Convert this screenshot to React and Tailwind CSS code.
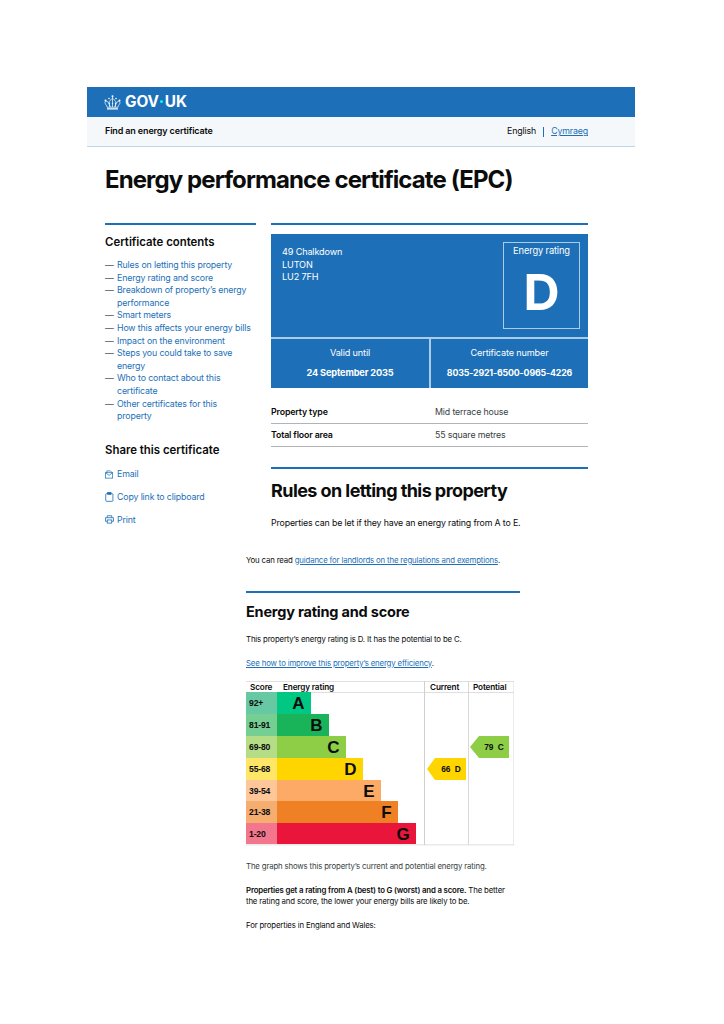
import React from "react";

const navItems = [
  ["Rules on letting this property"],
  ["Energy rating and score"],
  ["Breakdown of property’s energy", "performance"],
  ["Smart meters"],
  ["How this affects your energy bills"],
  ["Impact on the environment"],
  ["Steps you could take to save", "energy"],
  ["Who to contact about this", "certificate"],
  ["Other certificates for this", "property"],
];

const bands = [
  { s: "92+", l: "A", c: "#00c781", p: "#66c9a3", end: 65, y: 11, h: 22 },
  { s: "81-91", l: "B", c: "#19b459", p: "#75cf93", end: 83, y: 33, h: 22 },
  { s: "69-80", l: "C", c: "#8dce46", p: "#b5dd85", end: 100, y: 55, h: 22 },
  { s: "55-68", l: "D", c: "#ffd500", p: "#ffe666", end: 117, y: 77, h: 22 },
  { s: "39-54", l: "E", c: "#fcaa65", p: "#fdc79a", end: 135, y: 99, h: 21 },
  { s: "21-38", l: "F", c: "#ef8023", p: "#f5ad70", end: 152, y: 120, h: 22 },
  { s: "1-20", l: "G", c: "#e9153b", p: "#f4768c", end: 170, y: 142, h: 21 },
];

function Chart() {
  const arial = "'Liberation Sans', Arial, sans-serif";
  return (
    <svg width="268" height="165" viewBox="0 0 268 165" className="block mt-[12px]">
      <rect x="0" y="0" width="268" height="0.8" fill="#d8d8d8" />
      <rect x="0" y="11" width="268" height="0.8" fill="#d8d8d8" />
      <rect x="0" y="163.5" width="268" height="0.8" fill="#d8d8d8" />
      <rect x="178" y="0" width="1" height="164" fill="#cfcfcf" />
      <rect x="222" y="0" width="1" height="164" fill="#d8d8d8" />
      <rect x="267.5" y="0" width="0.8" height="164" fill="#d8d8d8" />
      <g fontFamily="'Inter', sans-serif" fontSize="8.2" fontWeight="600" fill="#0b0c0c">
        <text x="4" y="9.3">Score</text>
        <text x="37" y="9.3">Energy rating</text>
        <text x="184" y="9.3">Current</text>
        <text x="227" y="9.3">Potential</text>
      </g>
      {bands.map((b) => (
        <g key={b.l}>
          <rect x="0" y={b.y} width="31" height={b.h} fill={b.p} />
          <rect x="31" y={b.y} width={b.end - 31} height={b.h} fill={b.c} />
          <text x="3" y={b.y + 14} fontFamily={arial} fontSize="8.6" fontWeight="700" fill="#0b0c0c">{b.s}</text>
          <text x={b.end - 6.5} y={b.y + 17} textAnchor="end" fontFamily={arial} fontSize="17" fontWeight="700" fill="#0b0c0c">{b.l}</text>
        </g>
      ))}
      <polygon points="181,88 189,77 220,77 220,99 189,99" fill="#ffd500" />
      <text x="205" y="91" textAnchor="middle" fontFamily={arial} fontSize="8.4" fontWeight="700" fill="#0b0c0c" xmlSpace="preserve">66  D</text>
      <polygon points="224,66 233,55 263,55 263,77 233,77" fill="#8dce46" />
      <text x="248" y="69" textAnchor="middle" fontFamily={arial} fontSize="8.4" fontWeight="700" fill="#0b0c0c" xmlSpace="preserve">79  C</text>
    </svg>
  );
}

function Crown() {
  return (
    <svg width="17" height="15" viewBox="0 0 34 30" fill="none">
      <g fill="#ffffff">
        <circle cx="17" cy="2.5" r="2" />
        <circle cx="10" cy="7" r="1.6" />
        <circle cx="24" cy="7" r="1.6" />
        <circle cx="3" cy="11" r="2" />
        <circle cx="31" cy="11" r="2" />
        <circle cx="11" cy="17" r="1.3" />
        <circle cx="17" cy="17" r="1.3" />
        <circle cx="23" cy="17" r="1.3" />
        <rect x="6" y="26.5" width="22" height="2.5" />
      </g>
      <path d="M17 4v3M6.5 24.5C5 20 2 18 2 15c0-2 2-3 4-2 3 1 5 5 6 11M27.5 24.5C29 20 32 18 32 15c0-2-2-3-4-2-3 1-5 5-6 11M12 24c-2-6-3-10 0-13 2-2 3-3 5-4 2 1 3 2 5 4 3 3 2 7 0 13M17 7v17M6 24.5h22" stroke="#ffffff" strokeWidth="1.4" />
    </svg>
  );
}

export default function App() {
  return (
    <div className="min-h-[1024px] bg-white pt-[87px] pl-[87px] font-['Inter',sans-serif] text-[#0b0c0c] text-[8.8px] tracking-[-0.14px] leading-[12.6px]">
      <div className="w-[548px]">
        <div className="bg-[#1d70b8] h-[30px] pl-[17px] flex items-center gap-[4px] text-white">
          <Crown />
          <span className="flex items-center text-[15.3px] font-bold leading-none tracking-[-0.1px]">
            GOV<span className="w-[3px] h-[3px] rounded-full bg-[#00ffe0] mx-[1.5px]" />UK
          </span>
        </div>
        <div className="h-[30px] bg-[#f4f8fb] border-b border-[#bcd5ec] pl-[18px] pr-[47px] flex items-center justify-between">
          <span className="font-semibold text-[9px]">Find an energy certificate</span>
          <span className="flex items-center">
            <span>English</span>
            <span className="mx-[7px] h-[10px] w-px bg-[#1d70b8]" />
            <a className="text-[#1d70b8] underline">Cymraeg</a>
          </span>
        </div>
      </div>

      <h1 className="ml-[18px] mt-[18px] text-[24px] leading-[30px] font-bold tracking-[-0.9px]">
        Energy performance certificate (EPC)
      </h1>

      <div className="ml-[18px] mt-[28px] flex gap-[15px]">
        <aside className="w-[151px] shrink-0 border-t-2 border-[#1d70b8] pt-[10px]">
          <h2 className="text-[11.4px] leading-[15px] font-semibold tracking-normal">Certificate contents</h2>
          <ul className="mt-[9px]">
            {navItems.map((lines) => (
              <li key={lines[0]} className="flex text-[#1d70b8]">
                <span className="w-[12px] shrink-0 text-[#505a5f]">—</span>
                <a className="flex flex-col whitespace-nowrap">
                  {lines.map((t) => (
                    <span key={t}>{t}</span>
                  ))}
                </a>
              </li>
            ))}
          </ul>
          <h2 className="mt-[20px] text-[11.4px] leading-[15px] font-semibold tracking-normal">Share this certificate</h2>
          <ul className="mt-[10px] flex flex-col gap-[10.4px] text-[#1d70b8]">
            <li className="flex items-center gap-[3px]">
              <svg width="9" height="9" viewBox="0 0 10 10" fill="none" stroke="#1d70b8" strokeWidth="0.8"><rect x="0.5" y="3" width="8" height="6" /><path d="M.5 3l4 3 4-3M2 3V1h4l2 2" /></svg>
              <span>Email</span>
            </li>
            <li className="flex items-center gap-[3px]">
              <svg width="9" height="10" viewBox="0 0 10 11" fill="none" stroke="#1d70b8" strokeWidth="0.9"><rect x="0.8" y="1.8" width="8" height="8.5" rx="1" /><rect x="3" y="0.5" width="3.6" height="2" fill="#1d70b8" /></svg>
              <span>Copy link to clipboard</span>
            </li>
            <li className="flex items-center gap-[3px]">
              <svg width="9" height="9" viewBox="0 0 10 10" fill="none" stroke="#1d70b8" strokeWidth="0.9"><path d="M2.5 3V.8h5V3M2.5 7H.6V3h8.8v4H7.5" /><rect x="2.5" y="5.5" width="5" height="3.5" /></svg>
              <span>Print</span>
            </li>
          </ul>
        </aside>

        <section className="w-[317px] border-t-2 border-[#1d70b8] pt-[9px]">
          <div className="bg-[#1d70b8] text-white">
            <div className="h-[105px] flex justify-between pl-[11px] pr-[8px] pt-[8px] border-b-2 border-[#a9cce8]">
              <div className="pt-[4px] text-[9.1px]">
                <div>49 Chalkdown</div>
                <div>LUTON</div>
                <div>LU2 7FH</div>
              </div>
              <div className="w-[77px] h-[87px] border border-[#a9cce8] flex flex-col items-center pt-[2px]">
                <div className="text-[9.3px]">Energy rating</div>
                <div className="mt-[4px] text-[50px] leading-[60px] font-bold">D</div>
              </div>
            </div>
            <div className="h-[49px] flex text-center">
              <div className="w-[160px] border-r-2 border-[#a9cce8] pt-[8px]">
                <div className="text-[9.1px]">Valid until</div>
                <div className="mt-[7.5px] font-bold text-[9.2px]">24 September 2035</div>
              </div>
              <div className="flex-1 pt-[8px]">
                <div className="text-[9.1px]">Certificate number</div>
                <div className="mt-[7.5px] font-bold">8035-2921-6500-0965-4226</div>
              </div>
            </div>
          </div>

          <dl className="mt-[13px]">
            <div className="flex h-[23px] items-center border-b border-[#b1b4b6]">
              <dt className="w-[164px] font-semibold">Property type</dt>
              <dd className="text-[#383f43]">Mid terrace house</dd>
            </div>
            <div className="flex h-[23px] items-center border-b border-[#b1b4b6]">
              <dt className="w-[164px] font-semibold">Total floor area</dt>
              <dd className="text-[#383f43]">55 square metres</dd>
            </div>
          </dl>

          <div className="mt-[20px] border-t-2 border-[#1d70b8] pt-[11px]">
            <h2 className="text-[18px] leading-[22px] font-bold tracking-[-0.57px]">Rules on letting this property</h2>
            <p className="mt-[15px]">Properties can be let if they have an energy rating from A to E.</p>
          </div>
        </section>
      </div>

      <div className="ml-[159px] w-[274px] text-[7.8px] tracking-[-0.15px] leading-[11px] mt-[25px]">
        <p>
          You can read <a className="text-[#1d70b8] underline">guidance for landlords on the regulations and exemptions</a>.
        </p>
        <div className="mt-[25px] border-t-2 border-[#1d70b8] pt-[9px]">
          <h2 className="text-[14.5px] leading-[20px] font-bold tracking-[-0.2px]">Energy rating and score</h2>
          <p className="mt-[12px]">This property’s energy rating is D. It has the potential to be C.</p>
          <p className="mt-[13px]">
            <a className="text-[#1d70b8] underline">See how to improve this property’s energy efficiency</a>.
          </p>
          <Chart />
          <p className="mt-[15px] text-[#383f43]">The graph shows this property’s current and potential energy rating.</p>
          <p className="mt-[13px]">
            <b className="font-semibold">Properties get a rating from A (best) to G (worst) and a score.</b> The better
            <br />
            the rating and score, the lower your energy bills are likely to be.
          </p>
          <p className="mt-[13px]">For properties in England and Wales:</p>
        </div>
      </div>
    </div>
  );
}
